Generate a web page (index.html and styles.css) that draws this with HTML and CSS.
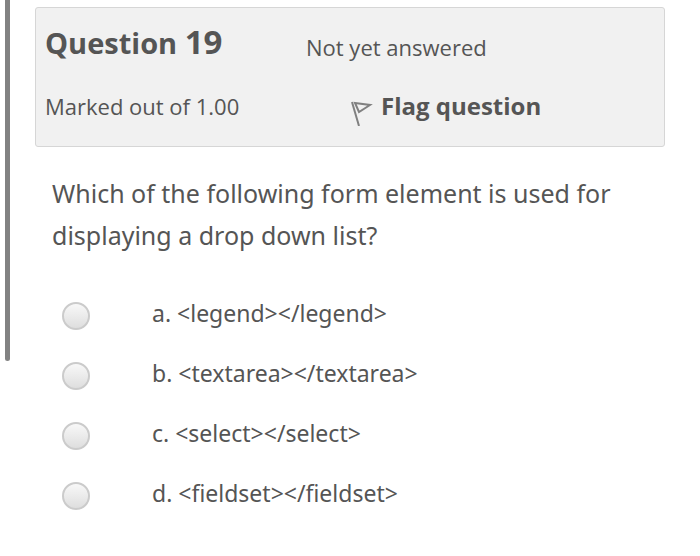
FILE: index.html
```
<!DOCTYPE html>
<html lang="en">
<head>
  <meta charset="UTF-8">
  <title>Question 19</title>
  <meta name="viewport" content="width=device-width, initial-scale=1.0">
  <link rel="stylesheet" href="styles.css">
</head>
<body>
<div class="scroll-mark"></div>
<main class="question">

  <!-- Question info -->
  <section class="info">
    <h3 class="info-title">Question <span class="qno">19</span></h3>
    <div class="info-state">Not yet answered</div>
    <div class="info-grade">Marked out of 1.00</div>
    <button type="button" class="flag-btn">
      <svg class="flag-icon" viewBox="0 0 22 26" aria-hidden="true">
        <path class="flag-cloth" d="M4 3 L19 5 L8 12 Z" />
        <path class="flag-pole" d="M1 2 L8 26" />
      </svg>
      Flag question
    </button>
  </section>

  <!-- Answers -->
  <form class="formulation">
    <p class="qtext">Which of the following form element is used for displaying a drop down list?</p>
    <div class="answer">
      <div class="option">
        <input type="radio" name="answer" id="answer-a">
        <label for="answer-a">a. &lt;legend&gt;&lt;/legend&gt;</label>
      </div>
      <div class="option">
        <input type="radio" name="answer" id="answer-b">
        <label for="answer-b">b. &lt;textarea&gt;&lt;/textarea&gt;</label>
      </div>
      <div class="option">
        <input type="radio" name="answer" id="answer-c">
        <label for="answer-c">c. &lt;select&gt;&lt;/select&gt;</label>
      </div>
      <div class="option">
        <input type="radio" name="answer" id="answer-d">
        <label for="answer-d">d. &lt;fieldset&gt;&lt;/fieldset&gt;</label>
      </div>
    </div>
  </form>
</main>
</body>
</html>
```
FILE: styles.css
```
* {
  box-sizing: border-box;
}

body {
  margin: 0;
  background: #fff;
  color: #555;
  font-family: "Open Sans", "Noto Sans", sans-serif;
  font-size: 24px;
}

/* Scroll indicator on the left edge */
.scroll-mark {
  position: absolute;
  top: 0;
  left: 5px;
  width: 5px;
  height: 361px;
  background: #828282;
  border-radius: 0 0 3px 3px;
}

.question {
  padding: 7px 35px 24px;
}

.info {
  display: grid;
  grid-template-columns: 261px 1fr;
  align-items: end;
  row-gap: 19px;
  padding: 14px 9px 20px;
  background: #f1f1f1;
  border: 1px solid #d6d6d6;
  border-radius: 3px;
  font-size: 22px;
  line-height: 40px;
}

.info-title {
  margin: 0;
  padding-bottom: 4px;
  font-size: 29px;
  font-weight: 700;
}

.qno {
  font-size: 33px;
}

.flag-btn {
  display: flex;
  align-items: flex-end;
  justify-self: start;
  gap: 8px;
  margin-left: 45px;
  padding: 0;
  border: none;
  background: none;
  color: inherit;
  font: inherit;
  font-size: 24px;
  font-weight: 700;
  cursor: pointer;
}

.flag-icon {
  width: 22px;
  height: 26px;
  fill: none;
  stroke: #808080;
}

.flag-cloth {
  stroke-width: 2;
}

.flag-pole {
  stroke-width: 2;
}

.formulation {
  padding: 25px 17px 0;
  font-family: "Noto Sans", "Open Sans", sans-serif;
}

.qtext {
  margin: 0;
  font-size: 25px;
  line-height: 42px;
}

.answer {
  margin-top: 30px;
}

.option {
  display: flex;
  align-items: center;
  gap: 62px;
  padding-left: 10px;
  height: 60px;
  font-size: 23px;
}

.option label {
  padding-bottom: 6px;
}

.option input {
  appearance: none;
  width: 28px;
  height: 28px;
  margin: 0;
  border: 2px solid #cbcbcb;
  border-radius: 50%;
  background: linear-gradient(#fafafa, #dcdcdc) border-box;
}
```
